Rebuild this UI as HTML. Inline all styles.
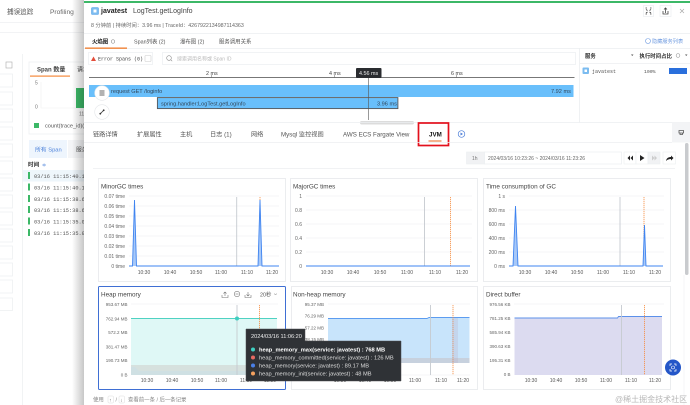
<!DOCTYPE html>
<html><head><meta charset="utf-8"><style>
html,body{margin:0;padding:0;background:#fff;width:690px;height:405px;overflow:hidden}
svg{display:block;filter:blur(.35px)}
text{font-family:"Liberation Sans","Noto Sans CJK SC",sans-serif;font-size:6.6px;fill:#555}
.m{font-family:"Liberation Mono","Noto Sans CJK SC",monospace;font-size:6px}
.a{font-size:5px;fill:#666;text-anchor:end}
.k{font-size:4.5px;fill:#666;text-anchor:end}
.x{font-size:5px;fill:#555;text-anchor:middle}
.h{font-size:6.35px;fill:#444}
.g{stroke:#f1f3f5;stroke-width:.7}
.b{fill:#fff;stroke:#e9ebee;stroke-width:.9}
.tt{font-size:6px;fill:#ddd}
.v{stroke:#c6cad0;stroke-width:.9}
.o{stroke:#f58a3c;stroke-width:.8;stroke-dasharray:1.2 .8}
</style></head><body>
<svg width="690" height="405" viewBox="0 0 690 405" xmlns="http://www.w3.org/2000/svg">
<defs><linearGradient id="sh" x1="0" x2="1" y1="0" y2="0"><stop offset="0" stop-color="#000" stop-opacity="0"/><stop offset="1" stop-color="#000" stop-opacity=".22"/></linearGradient></defs>
<rect width="690" height="405" fill="#fff"/>
<!-- background page -->
<text x="7" y="14" style="font-size:6.6px;fill:#555">捕误追踪</text>
<text x="50" y="14" style="font-size:6.6px;fill:#666">Profiling</text>
<path d="M0 22.5H84M0 32.5H84" stroke="#eef0f2" stroke-width=".8"/>
<path d="M22.5 54V405" stroke="#eef0f2" stroke-width=".8"/>
<rect x="6" y="62" width="6" height="6" fill="none" stroke="#aaa" stroke-width=".6"/>
<g fill="#fff" stroke="#eef0f2" stroke-width=".8">
<rect x="-3" y="74" width="15.5" height="13"/><rect x="-3" y="92" width="15.5" height="13"/><rect x="-3" y="109" width="15.5" height="13"/><rect x="-3" y="127" width="15.5" height="13"/><rect x="-3" y="144" width="15.5" height="13"/><rect x="-3" y="161" width="15.5" height="13"/><rect x="-3" y="178" width="15.5" height="13"/><rect x="-3" y="195" width="15.5" height="13"/><rect x="-3" y="212" width="15.5" height="13"/><rect x="-3" y="229" width="15.5" height="13"/><rect x="-3" y="246" width="15.5" height="13"/><rect x="-3" y="263" width="15.5" height="13"/><rect x="-3" y="280" width="15.5" height="13"/><rect x="-3" y="298" width="15.5" height="12.5"/>
</g>
<rect x="29" y="62" width="70" height="72" fill="#fff" stroke="#eef0f2" stroke-width=".8"/>
<text x="37" y="71.5" style="font-size:6px;fill:#444;font-weight:bold">Span 数量</text>
<text x="77" y="71.5" style="font-size:6px;fill:#444">请求</text>
<rect x="30" y="75.5" width="40" height="1.2" fill="#f58a3c"/>
<text x="35" y="84.5" style="font-size:5px;fill:#777">5</text>
<text x="35" y="108.5" style="font-size:5px;fill:#777">0</text>
<path d="M41 82V108H84" fill="none" stroke="#f0f0f0" stroke-width=".6"/>
<rect x="76" y="88" width="9" height="20" fill="#3cb867"/>
<text x="79" y="115.5" style="font-size:5px;fill:#777">11</text>
<rect x="34" y="123" width="5" height="5" fill="#3cb867"/>
<text x="45" y="127.5" style="font-size:5.6px;fill:#555">count(trace_id)(</text>
<rect x="29" y="140" width="38" height="18" fill="#eef5fd"/>
<rect x="68" y="140" width="16" height="18" fill="#f4f5f7"/>
<text x="35" y="151.5" style="font-size:5.8px;fill:#4e83db">所有 Span</text>
<text x="76" y="151.5" style="font-size:5.8px;fill:#555">服务</text>
<text x="28" y="166.5" style="font-size:5.6px;fill:#333;font-weight:bold">时间</text>
<text x="42" y="166.5" style="font-size:5px;fill:#4e83db">≑</text>
<rect x="23" y="170" width="61" height="11.5" fill="#eef6fb"/>
<g fill="#3cb867"><rect x="28" y="172" width="2" height="7"/><rect x="28" y="183.5" width="2" height="7"/><rect x="28" y="195" width="2" height="7"/><rect x="28" y="206" width="2" height="7"/><rect x="28" y="217.5" width="2" height="7"/><rect x="28" y="229" width="2" height="7"/></g>
<text class="m" x="34" y="178" style="font-size:5.3px">03/16 11:15:40.11</text>
<text class="m" x="34" y="189.5" style="font-size:5.3px">03/16 11:15:40.11</text>
<text class="m" x="34" y="201" style="font-size:5.3px">03/16 11:15:38.60</text>
<text class="m" x="34" y="212" style="font-size:5.3px">03/16 11:15:38.60</text>
<text class="m" x="34" y="223.5" style="font-size:5.3px">03/16 11:15:35.04</text>
<text class="m" x="34" y="235" style="font-size:5.3px">03/16 11:15:35.04</text>
<rect x="72" y="0" width="12" height="405" fill="url(#sh)"/>
<!-- panel -->
<rect x="84" y="0" width="606" height="405" fill="#fff"/>
<rect x="84" y="1" width="606" height="2" fill="#3cb867"/>
<rect x="91.5" y="7.5" width="7" height="7" rx="1" fill="#7cbcf0" stroke="#5aa4e8" stroke-width=".6"/>
<rect x="93.5" y="9.5" width="3" height="3" fill="#fff"/>
<text x="101" y="13" style="font-size:7px;font-weight:bold;fill:#222">javatest</text>
<text x="133" y="13" style="font-size:7px;fill:#444">LogTest.getLogInfo</text>
<text x="91" y="27" style="font-size:5.3px;fill:#666">8 分钟前 | 持续时间：3.96 ms | TraceId：4267922134987114363</text>
<rect x="643.5" y="5.5" width="10" height="11" fill="#fff" stroke="#eceef1" stroke-width=".7"/>
<path d="M646 9.500l1.500 1M651 9.500l-1.500 1M646 13l1.500-1M651 13l-1.500-1M645.500 8h1.500M651.500 8H650M645.500 14h1.500M651.500 14H650" fill="none" stroke="#444" stroke-width=".8"/>
<rect x="660" y="5.5" width="11" height="11" fill="#fff" stroke="#eceef1" stroke-width=".7"/>
<path d="M663 11v3h5v-3M665.500 13V8M664 9.500l1.500-1.500 1.500 1.500" fill="none" stroke="#444" stroke-width=".8"/>
<path d="M680 9l4 4M684 9l-4 4" stroke="#aaa" stroke-width=".7"/>
<path d="M84 33.500H690M84 48.500H690" stroke="#eceef1" stroke-width=".8"/>
<text x="92" y="43.500" style="font-size:5.400px;fill:#222;font-weight:bold">火焰图</text>
<circle cx="113" cy="41.500" r="1.800" fill="none" stroke="#777" stroke-width=".5"/>
<rect x="85" y="47.500" width="42" height="1.300" fill="#f07a28"/>
<text x="134" y="43.500" style="font-size:5.400px;fill:#555">Span列表 (2)</text>
<text x="180" y="43.500" style="font-size:5.400px;fill:#555">瀑布图 (2)</text>
<text x="219" y="43.500" style="font-size:5.400px;fill:#555">服务调用关系</text>
<circle cx="648" cy="41" r="2.500" fill="none" stroke="#6f9be0" stroke-width=".6"/>
<text x="652" y="43.200" style="font-size:5.200px;fill:#6f9be0">隐藏服务列表</text>
<rect x="88.500" y="52.500" width="64" height="12" fill="#fff" stroke="#eceef1" stroke-width=".7"/>
<path d="M91 61l2.500-4.500L96 61z" fill="#e34d3a"/>
<text class="m" x="98" y="60.500" style="font-size:5px;fill:#444">Error Spans (0)</text>
<rect x="145" y="55.500" width="6" height="6" rx=".6" fill="#fff" stroke="#ccc" stroke-width=".6"/>
<rect x="162.500" y="52.500" width="413" height="12" fill="#fff" stroke="#eceef1" stroke-width=".7"/>
<circle cx="169" cy="58" r="2.300" fill="none" stroke="#888" stroke-width=".6"/><path d="M170.700 59.700l1.500 1.500" stroke="#888" stroke-width=".6"/>
<text x="177" y="60.500" style="font-size:5px;fill:#bbb">搜索调用名称或 Span ID</text>
<!-- timeline -->
<path d="M89 77.500H574.500" stroke="#777" stroke-width=".9"/>
<path d="M211.500 75v3M334.500 75v3M456.500 75v3" stroke="#666" stroke-width=".5"/>
<text x="206" y="75" style="font-size:5.400px;fill:#444">2 ms</text>
<text x="329" y="75" style="font-size:5.400px;fill:#444">4 ms</text>
<text x="451" y="75" style="font-size:5.400px;fill:#444">6 ms</text>
<rect x="89" y="85" width="484.500" height="12" fill="#69bffb"/>
<text x="111" y="92.800" style="font-size:5.600px;fill:#33475b">request GET /loginfo</text>
<text x="551" y="92.800" style="font-size:5.600px;fill:#33475b">7.92 ms</text>
<rect x="157.400" y="97.600" width="240.500" height="11" fill="#69bffb" stroke="#555" stroke-width=".9"/>
<text x="161" y="105.300" style="font-size:5.600px;fill:#33475b">spring.handler:LogTest.getLogInfo</text>
<text x="377" y="105.300" style="font-size:5.600px;fill:#33475b">3.96 ms</text>
<path d="M368.500 77V120" stroke="#555" stroke-width=".6"/>
<rect x="356" y="68" width="25.500" height="10" rx="1" fill="#2a2c30"/>
<text x="359" y="75.200" style="font-size:5.400px;fill:#eee">4.56 ms</text>
<circle cx="102" cy="93" r="7.300" fill="#fff" stroke="#e4e6e9" stroke-width=".6"/>
<path d="M99.500 91h5M99.500 93h5M99.500 95h5" stroke="#333" stroke-width=".8"/>
<circle cx="102" cy="112" r="7.300" fill="#fff" stroke="#e4e6e9" stroke-width=".6"/>
<path d="M100 114l4-4" stroke="#333" stroke-width=".8"/><circle cx="100.300" cy="113.700" r=".9" fill="#333"/><circle cx="103.700" cy="110.300" r=".9" fill="#333"/>
<rect x="360" y="121" width="54" height="3.500" rx="1.700" fill="#dcdcdc"/>
<path d="M579.500 48V122.500M84 122.500H690" stroke="#eceef1" stroke-width=".8"/>
<!-- service list -->
<text x="585" y="58" style="font-size:5.400px;font-weight:bold;fill:#333">服务</text>
<path d="M631 54.500h2.500l-1.250 1.500z" fill="#555"/>
<text x="639.500" y="58" style="font-size:5.400px;font-weight:bold;fill:#333">执行时间占比</text>
<circle cx="678" cy="55.500" r="1.900" fill="none" stroke="#888" stroke-width=".5"/>
<path d="M685 54.500h2.500l-1.250 1.500z" fill="#555"/>
<path d="M580 63.500H690" stroke="#eceef1" stroke-width=".8"/>
<rect x="582.500" y="67.500" width="6.500" height="6.500" rx="1" fill="#7cbcf0"/><rect x="584.500" y="69.500" width="2.500" height="2.500" fill="#fff"/>
<text class="m" x="592" y="72.800" style="font-size:5px">javatest</text>
<text class="m" x="644" y="73" style="font-size:4.800px">100%</text>
<rect x="669" y="68" width="18" height="6" fill="#2a6fdc"/>
<!-- tabs -->
<text x="93" y="136.500" style="font-size:6.200px">链路详情</text>
<text x="137" y="136.500" style="font-size:6.200px">扩展属性</text>
<text x="180" y="136.500" style="font-size:6.200px">主机</text>
<text x="210" y="136.500" style="font-size:6.200px">日志 (1)</text>
<text x="251" y="136.500" style="font-size:6.200px">网络</text>
<text x="281" y="136.500" style="font-size:6.200px">Mysql 监控视图</text>
<text x="343" y="136.500" style="font-size:6.200px">AWS ECS Fargate View</text>
<text x="429" y="136.500" style="font-size:6.200px;font-weight:bold;fill:#111">JVM</text>
<rect x="428.500" y="140.500" width="13" height="1" fill="#e8641e"/>
<rect x="418.500" y="123" width="30" height="22.500" fill="none" stroke="#e3101c" stroke-width="1.700"/>
<circle cx="461.500" cy="134" r="3.300" fill="none" stroke="#4e7fd8" stroke-width=".7"/><path d="M460.500 132.500l2.500 1.500-2.500 1.500z" fill="#4e7fd8"/>
<rect x="672" y="122.500" width="18" height="20" fill="#f3f4f6"/>
<path d="M679 130.500h4.500v2.500h-4.500zM680 133v1.500h2.500V133" fill="none" stroke="#555" stroke-width=".8"/>
<path d="M84 142.500H672" stroke="#eceef1" stroke-width=".8"/>
<!-- time -->
<rect x="466.500" y="152" width="18" height="12" fill="#f1f2f4" stroke="#eceef1" stroke-width=".6"/>
<text x="472" y="160" style="font-size:5px;fill:#777">1h</text>
<rect x="484.500" y="152" width="137" height="12" fill="#fff" stroke="#eceef1" stroke-width=".7"/>
<text x="488" y="160" style="font-size:5px;fill:#666">2024/03/16 10:23:26 ~ 2024/03/16 11:23:26</text>
<rect x="624" y="152" width="12" height="12" fill="#fff" stroke="#eceef1" stroke-width=".6"/>
<rect x="636" y="152" width="12" height="12" fill="#fff" stroke="#eceef1" stroke-width=".6"/>
<rect x="648" y="152" width="12" height="12" fill="#f1f2f4" stroke="#eceef1" stroke-width=".6"/>
<rect x="663" y="152" width="12.500" height="12" fill="#fff" stroke="#eceef1" stroke-width=".6"/>
<path d="M630 155.500v5l-2.500-2.500zM633 155.500v5l-2.500-2.500zM640 155l4.500 3-4.500 3z" fill="#222"/>
<path d="M652 155.500v5l2.500-2.500zM654.500 155.500v5l2.500-2.500z" fill="#ccc"/>
<path d="M666 161c.5-3 2.500-4 5-4v-1.500l2.500 2.500-2.500 2.500v-1.500c-2 0-3.500.5-5 2z" fill="#222"/>
<path d="M93 168.500H675" stroke="#eceef1" stroke-width=".8"/>
<rect x="685" y="143" width="3.500" height="132" rx="1.700" fill="#c9cbce"/>
<path d="M684 275V405" stroke="#f1f2f4" stroke-width=".7"/>

<!-- cards -->
<rect class="b" x="98.500" y="178.500" width="187" height="103"/>
<rect class="b" x="290.500" y="178.500" width="187" height="103"/>
<rect class="b" x="483.500" y="178.500" width="187" height="103"/>
<rect class="b" x="291.500" y="286.500" width="186" height="103"/>
<rect class="b" x="483.500" y="286.500" width="187" height="103"/>
<rect x="98.500" y="286.500" width="187" height="103" rx="1" fill="#fff" stroke="#3f6fd4" stroke-width="1"/>

<!-- MinorGC -->
<text class="h" x="101" y="188.500">MinorGC times</text>
<path class="g" d="M129 196H279M129 206H279M129 216H279M129 226H279M129 236H279M129 246H279M129 256H279"/>
<g><text class="a" x="125" y="198">0.07 time</text><text class="a" x="125" y="208">0.06 time</text><text class="a" x="125" y="218">0.05 time</text><text class="a" x="125" y="228">0.04 time</text><text class="a" x="125" y="238">0.03 time</text><text class="a" x="125" y="248">0.02 time</text><text class="a" x="125" y="258">0.01 time</text><text class="a" x="125" y="268">0 time</text></g>
<path class="v" d="M236.700 197V266"/>
<path class="o" d="M260 197V266"/>
<path d="M132.500 266L134.500 200L136.500 266zM258 266L260 200L262 266z" fill="#a7c8f8"/>
<path d="M129 266H132.500L134.500 200L136.500 266H258L260 200L262 266H279" fill="none" stroke="#3f84f0" stroke-width=".9"/>
<text class="x" x="144" y="274">10:30</text><text class="x" x="170" y="274">10:40</text><text class="x" x="196" y="274">10:50</text><text class="x" x="221" y="274">11:00</text><text class="x" x="247" y="274">11:10</text><text class="x" x="272" y="274">11:20</text>

<!-- MajorGC -->
<text class="h" x="293" y="188.500">MajorGC times</text>
<path class="g" d="M306 196H472M306 210H472M306 224H472M306 238H472M306 252H472"/>
<text class="a" x="302" y="198">1</text><text class="a" x="302" y="212">0.8</text><text class="a" x="302" y="226">0.6</text><text class="a" x="302" y="240">0.4</text><text class="a" x="302" y="254">0.2</text><text class="a" x="302" y="268">0</text>
<path class="v" d="M424.500 197V266"/>
<path class="o" d="M450.500 197V266"/>
<path d="M306 266H470" stroke="#3f84f0" stroke-width=".9"/>
<text class="x" x="327" y="274">10:30</text><text class="x" x="353" y="274">10:40</text><text class="x" x="380" y="274">10:50</text><text class="x" x="407" y="274">11:00</text><text class="x" x="435" y="274">11:10</text><text class="x" x="462" y="274">11:20</text>

<!-- GC time -->
<text class="h" x="486" y="188.500">Time consumption of GC</text>
<path class="g" d="M509 196H664M509 210H664M509 224H664M509 238H664M509 252H664"/>
<text class="a" x="505" y="198">1 s</text><text class="a" x="505" y="212">800 ms</text><text class="a" x="505" y="226">600 ms</text><text class="a" x="505" y="240">400 ms</text><text class="a" x="505" y="254">200 ms</text><text class="a" x="505" y="268">0 ms</text>
<path class="v" d="M620 197V266"/>
<path class="o" d="M644 197V266"/>
<path d="M513 266L515.500 206L518 266zM643 266L644.500 225L646 266z" fill="#a7c8f8"/>
<path d="M509 266H513L515.500 206L518 266H643L644.500 225L646 266H663" fill="none" stroke="#3f84f0" stroke-width=".9"/>
<text class="x" x="525" y="274">10:30</text><text class="x" x="551" y="274">10:40</text><text class="x" x="577" y="274">10:50</text><text class="x" x="603" y="274">11:00</text><text class="x" x="629" y="274">11:10</text><text class="x" x="655" y="274">11:20</text>

<!-- Heap -->
<text class="h" x="101" y="296.500">Heap memory</text>
<path d="M222 295v2.500h6V295M225 296v-4M223.500 293.500l1.500-1.500 1.500 1.500" fill="none" stroke="#777" stroke-width=".6"/>
<circle cx="237" cy="294" r="2.700" fill="none" stroke="#777" stroke-width=".6"/><path d="M235.500 294h3" stroke="#777" stroke-width=".6"/>
<path d="M245 295v2.500h6V295M248 292v4M246.500 294.500l1.500 1.500 1.500-1.500" fill="none" stroke="#777" stroke-width=".6"/>
<text x="260" y="296.500" style="font-size:5.400px;fill:#555">20秒</text>
<path d="M274 293.500l1.500 1.500 1.500-1.500" fill="none" stroke="#777" stroke-width=".5"/>
<path class="g" d="M131 304H278M131 332H278M131 346H278M131 360H278"/>
<text class="k" x="127.500" y="306">953.67 MB</text><text class="k" x="127.500" y="320.500">762.94 MB</text><text class="k" x="127.500" y="334">572.2 MB</text><text class="k" x="127.500" y="348.500">381.47 MB</text><text class="k" x="127.500" y="362">190.73 MB</text><text class="k" x="127.500" y="376.500">0 B</text>
<rect x="131" y="318.500" width="146" height="56.500" fill="#dff8f6"/>
<rect x="131" y="365" width="146" height="10" fill="#d6e1de"/>
<path d="M131 375V367H135L139 371H277V375z" fill="#cfe0e3"/>
<path d="M131 318.500H277" stroke="#4fd2c2" stroke-width=".9"/>
<path class="v" d="M237 305V375"/>
<path class="o" d="M259.500 305V375"/>
<circle cx="237" cy="318.500" r="2" fill="#3fcec0"/>
<text class="x" x="147" y="382">10:30</text><text class="x" x="172" y="382">10:40</text><text class="x" x="197" y="382">10:50</text><text class="x" x="221" y="382">11:00</text><text class="x" x="246" y="382">11:10</text><text class="x" x="270" y="382">11:20</text>

<!-- Non-heap -->
<text class="h" x="293" y="296.500">Non-heap memory</text>
<path class="g" d="M328 304H470M328 375H470"/>
<text class="k" x="324" y="306">95.37 MB</text><text class="k" x="324" y="317.700">76.29 MB</text><text class="k" x="324" y="329.300">57.22 MB</text><text class="k" x="324" y="341">38.15 MB</text><text class="k" x="324" y="352.500">19.07 MB</text><text class="k" x="324" y="365">0 B</text>
<path d="M328 318.500H427L429 317.500H469.500V363H328z" fill="#c8e4fb"/>
<rect x="328" y="358" width="141.500" height="5" fill="#c7d1de"/>
<path d="M328 318.500H427L429 317.500H469.500" fill="none" stroke="#5c9cf0" stroke-width=".9"/>
<path class="v" d="M430.500 305V375"/>
<path class="o" d="M453 305V375"/>
<path d="M452 318H458V363H452z" fill="#b9a8c0" opacity=".25"/>
<text class="x" x="340" y="382">10:30</text><text class="x" x="365" y="382">10:40</text><text class="x" x="390" y="382">10:50</text><text class="x" x="415" y="382">11:00</text><text class="x" x="441" y="382">11:10</text><text class="x" x="463" y="382">11:20</text>

<!-- Direct -->
<text class="h" x="486" y="296.500">Direct buffer</text>
<path class="g" d="M514 304H664"/>
<text class="k" x="510.500" y="306">976.56 KB</text><text class="k" x="510.500" y="320">781.25 KB</text><text class="k" x="510.500" y="334">585.94 KB</text><text class="k" x="510.500" y="348">390.63 KB</text><text class="k" x="510.500" y="362">195.31 KB</text><text class="k" x="510.500" y="376">0 B</text>
<path d="M514.500 318H617.500L618.500 316.500H662V375H514.500z" fill="#dcdbf0"/>
<path d="M514.500 318H617.500L618.500 316.500H662" fill="none" stroke="#5c90ea" stroke-width=".9"/>
<path class="v" d="M621.500 305V375"/>
<path class="o" d="M644.500 305V375"/>
<text class="x" x="531" y="382">10:30</text><text class="x" x="556" y="382">10:40</text><text class="x" x="581" y="382">10:50</text><text class="x" x="606" y="382">11:00</text><text class="x" x="631" y="382">11:10</text><text class="x" x="655" y="382">11:20</text>

<!-- tooltip -->
<path d="M246 329H305V341H401V381H246z" fill="#2f3236" stroke="#4a4d51" stroke-width=".5"/>
<text class="tt" x="251" y="338" style="font-size:5.600px;fill:#eee">2024/03/16 11:06:20</text>
<circle cx="253" cy="349.500" r="2" fill="#3fd0c2"/><circle cx="253" cy="357.500" r="2" fill="#e86a62"/><circle cx="253" cy="365.500" r="2" fill="#4a80e8"/><circle cx="253" cy="373.500" r="2" fill="#f5a15f"/>
<text class="tt" x="259" y="351.700" style="font-size:5.700px;fill:#fff;font-weight:bold">heap_memory_max(service: javatest) : 768 MB</text>
<text class="tt" x="259" y="359.700" style="font-size:5.700px">heap_memory_committed(service: javatest) : 126 MB</text>
<text class="tt" x="259" y="367.700" style="font-size:5.700px">heap_memory(service: javatest) : 89.17 MB</text>
<text class="tt" x="259" y="375.700" style="font-size:5.700px">heap_memory_init(service: javatest) : 48 MB</text>

<!-- footer -->
<text x="93" y="401.500" style="font-size:5.400px;fill:#888">使用</text>
<rect x="108" y="396" width="5.500" height="7" rx="1" fill="#fff" stroke="#ddd" stroke-width=".5"/>
<text x="109.300" y="401.500" style="font-size:4.600px;fill:#555">↑</text>
<text x="115.500" y="401.500" style="font-size:5.400px;fill:#888">/</text>
<rect x="119" y="396" width="5.500" height="7" rx="1" fill="#fff" stroke="#ddd" stroke-width=".5"/>
<text x="120.300" y="401.500" style="font-size:4.600px;fill:#555">↓</text>
<text x="128" y="401.500" style="font-size:5.400px;fill:#888">查看前一条 / 后一条记录</text>

<circle cx="673" cy="367.500" r="8" fill="#2456c8"/>
<path d="M670 366v-2h2M676 366v-2h-2M670 369v2h2M676 369v2h-2" fill="none" stroke="#fff" stroke-width=".7"/><circle cx="673" cy="367.500" r="1.500" fill="none" stroke="#fff" stroke-width=".6"/>
<text x="615" y="402" style="font-size:8px;fill:#b8b8b8">@稀土掘金技术社区</text>
</svg>
</body></html>
